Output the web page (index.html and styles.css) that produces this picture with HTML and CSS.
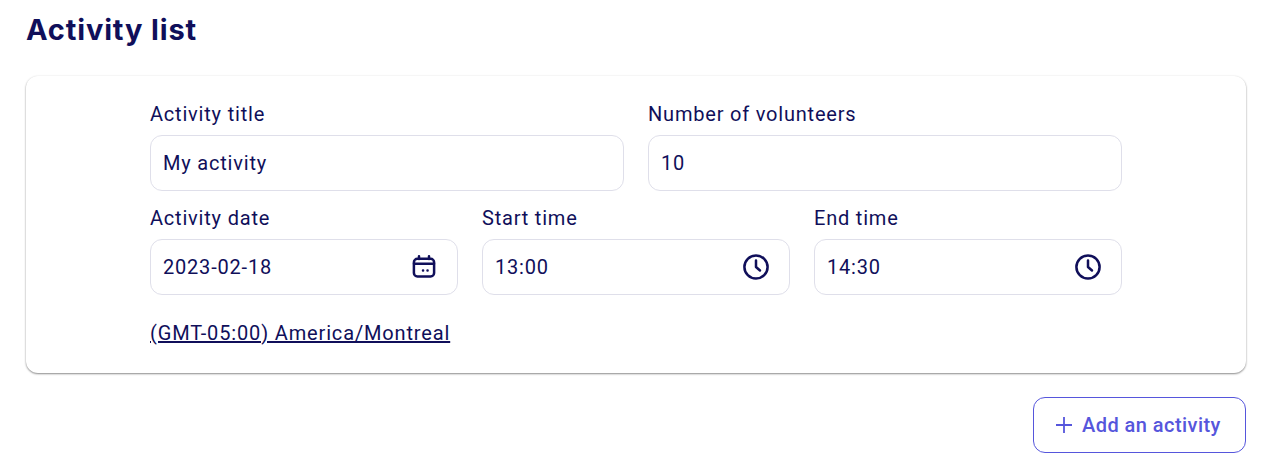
FILE: index.html
```html
<!DOCTYPE html>
<html lang="en">
<head>
  <meta charset="UTF-8">
  <title>Activity list</title>
  <link rel="stylesheet" href="styles.css">
</head>
<body>
  <h1 class="page-title">Activity list</h1>

  <div class="card">
    <div class="form-grid">
      <div class="field span-3">
        <label class="field-label">Activity title</label>
        <div class="input-box">My activity</div>
      </div>
      <div class="field span-3">
        <label class="field-label">Number of volunteers</label>
        <div class="input-box">10</div>
      </div>

      <div class="field span-2">
        <label class="field-label">Activity date</label>
        <div class="input-box">
          <span>2023-02-18</span>
          <svg class="input-icon" viewBox="0 0 24 24" fill="none" stroke="currentColor" stroke-width="2.500" stroke-linecap="round" stroke-linejoin="round">
            <rect x="1.900" y="3.800" width="20.200" height="17.700" rx="3.500"></rect>
            <path d="M7 1.200V4M17 1.200V4M2 8.700h20"></path>
            <path d="M11 15.500h.1M15.500 15.500h.1"></path>
          </svg>
        </div>
      </div>
      <div class="field span-2">
        <label class="field-label">Start time</label>
        <div class="input-box">
          <span>13:00</span>
          <svg class="input-icon" viewBox="0 0 24 24" fill="none" stroke="currentColor" stroke-width="2.500" stroke-linecap="round" stroke-linejoin="round">
            <circle cx="12" cy="12" r="11.600"></circle>
            <path d="M12 5.500V12l4 3.500"></path>
          </svg>
        </div>
      </div>
      <div class="field span-2">
        <label class="field-label">End time</label>
        <div class="input-box">
          <span>14:30</span>
          <svg class="input-icon" viewBox="0 0 24 24" fill="none" stroke="currentColor" stroke-width="2.500" stroke-linecap="round" stroke-linejoin="round">
            <circle cx="12" cy="12" r="11.600"></circle>
            <path d="M12 5.500V12l4 3.500"></path>
          </svg>
        </div>
      </div>
    </div>

    <a class="timezone" href="#">(GMT-05:00) America/Montreal</a>
  </div>

  <div class="actions">
    <button class="add-button">
      <svg class="add-icon" viewBox="0 0 16 16" fill="none" stroke="currentColor" stroke-width="1.800">
        <path d="M8 0v16M0 8h16"></path>
      </svg>
      Add an activity
    </button>
  </div>
</body>
</html>
```

FILE: styles.css
```css
body {
  margin: 0;
  padding: 0 22px 0 26px;
  background-color: #fff;
  color: #100f5a;
  font-family: Roboto, sans-serif;
}

.page-title {
  margin: 0;
  padding-top: 12px;
  height: 76px;
  box-sizing: border-box;
  font-family: Inter, sans-serif;
  font-size: 29px;
  line-height: 36px;
  font-weight: 700;
  letter-spacing: 0.85px;
}

.card {
  height: 297px;
  box-sizing: border-box;
  padding: 26px 124px 0;
  background-color: #fff;
  border-radius: 12px;
  box-shadow: 0 1px 2px rgba(0, 0, 0, 0.45), 0 0 3px rgba(0, 0, 0, 0.04);
}

.form-grid {
  display: grid;
  grid-template-columns: repeat(6, 1fr);
  column-gap: 24px;
  row-gap: 15px;
}

.span-3 {
  grid-column: span 3;
}

.span-2 {
  grid-column: span 2;
}

.field-label {
  display: block;
  font-size: 20px;
  line-height: 24px;
  letter-spacing: 0.8px;
  margin-bottom: 9px;
}

.input-box {
  display: flex;
  justify-content: space-between;
  align-items: center;
  height: 56px;
  box-sizing: border-box;
  padding: 0 21px 0 12px;
  border: 1px solid #dfdfea;
  border-radius: 12px;
  font-size: 20px;
  letter-spacing: 0.8px;
}

.input-icon {
  width: 24px;
  height: 24px;
  overflow: visible;
}

.timezone {
  display: inline-block;
  margin-top: 26px;
  color: #100f5a;
  font-size: 20px;
  line-height: 24px;
  letter-spacing: 0.85px;
}

.actions {
  display: flex;
  justify-content: flex-end;
  padding-top: 24px;
}

.add-button {
  display: flex;
  align-items: center;
  gap: 10px;
  width: 213px;
  height: 56px;
  box-sizing: border-box;
  padding: 0 0 0 22px;
  background-color: #fff;
  border: 1px solid #5656dc;
  border-radius: 12px;
  color: #5656dc;
  font-family: Roboto, sans-serif;
  font-size: 20px;
  font-weight: 500;
  letter-spacing: 0.45px;
}

.add-icon {
  width: 16px;
  height: 16px;
}
```
